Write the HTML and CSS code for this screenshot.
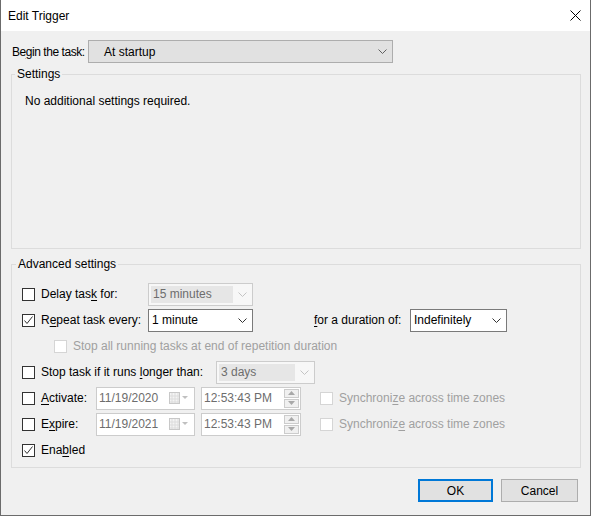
FILE: index.html
```html
<!DOCTYPE html>
<html>
<head>
<meta charset="utf-8">
<title>Edit Trigger</title>
<link rel="stylesheet" href="styles.css">
</head>
<body>
<div class="window">
  <div class="titlebar">
    <span class="title">Edit Trigger</span>
    <svg class="close" width="11" height="11" viewBox="0 0 11 11"><path d="M0.5 0.5L10.5 10.5M10.5 0.5L0.5 10.5" stroke="#000" stroke-width="1"/></svg>
  </div>
  <div class="content">
    <div class="begin-row">
      <span class="begin-label">Be<u>g</u>in the task:</span>
      <div class="combo combo-begin"><span class="combo-text">At startup</span><svg class="chev" width="9" height="5" viewBox="0 0 9 5"><path d="M0.5 0.5L4.5 4.5L8.5 0.5" fill="none" stroke="#606060"/></svg></div>
    </div>

    <fieldset class="group group-settings">
      <legend>Settings</legend>
      <p class="note">No additional settings required.</p>
    </fieldset>

    <fieldset class="group group-adv">
      <legend>Advanced settings</legend>

      <div class="row">
        <span class="cb"></span>
        <span class="lbl lbl-main">Delay tas<u>k</u> for:</span>
        <div class="combo combo-dis w105"><span class="combo-sel">15 minutes</span><svg class="chev" width="9" height="5" viewBox="0 0 9 5"><path d="M0.5 0.5L4.5 4.5L8.5 0.5" fill="none" stroke="#c4c4c4"/></svg></div>
      </div>

      <div class="row">
        <span class="cb checked"><svg width="11" height="11" viewBox="0 0 11 11"><path d="M1.5 5.5L4 8.5L9.5 1.5" fill="none" stroke="#333" stroke-width="1"/></svg></span>
        <span class="lbl lbl-main">R<u>e</u>peat task every:</span>
        <div class="combo combo-white w105"><span class="combo-text">1 minute</span><svg class="chev" width="9" height="5" viewBox="0 0 9 5"><path d="M0.5 0.5L4.5 4.5L8.5 0.5" fill="none" stroke="#333"/></svg></div>
        <span class="lbl lbl-dur"><u>f</u>or a duration of:</span>
        <div class="combo combo-white w97"><span class="combo-text">Indefinitely</span><svg class="chev" width="9" height="5" viewBox="0 0 9 5"><path d="M0.5 0.5L4.5 4.5L8.5 0.5" fill="none" stroke="#333"/></svg></div>
      </div>

      <div class="row row-indent">
        <span class="cb cb-dis"></span>
        <span class="lbl dis">Stop all running tasks at end of repetition duration</span>
      </div>

      <div class="row">
        <span class="cb"></span>
        <span class="lbl lbl-stop">Stop task if it runs <u>l</u>onger than:</span>
        <div class="combo combo-dis w99"><span class="combo-sel">3 days</span><svg class="chev" width="9" height="5" viewBox="0 0 9 5"><path d="M0.5 0.5L4.5 4.5L8.5 0.5" fill="none" stroke="#c4c4c4"/></svg></div>
      </div>

      <div class="row">
        <span class="cb"></span>
        <span class="lbl lbl-date"><u>A</u>ctivate:</span>
        <div class="field date"><span class="field-text">11/19/2020</span><span class="cal"><svg width="20" height="12" viewBox="0 0 20 12"><rect x="0.5" y="0.5" width="10" height="11" fill="#f4f4f4" stroke="#c8c8c8"/><path d="M3 1v10M6 1v10M9 1v10M1 4h9M1 7h9M1 10h9" stroke="#dcdcdc"/><path d="M13 4h6l-3 3z" fill="#c0c0c0"/></svg></span></div>
        <div class="field time"><span class="field-text">12:53:43 PM</span><span class="spin"><span class="spin-btn"><svg width="7" height="4" viewBox="0 0 7 4"><path d="M0 4h7L3.5 0z" fill="#a8a8a8"/></svg></span><span class="spin-btn"><svg width="7" height="4" viewBox="0 0 7 4"><path d="M0 0h7L3.5 4z" fill="#a8a8a8"/></svg></span></span></div>
        <span class="cb cb-dis sync-cb"></span>
        <span class="lbl dis">Synchroni<u>z</u>e across time zones</span>
      </div>

      <div class="row">
        <span class="cb"></span>
        <span class="lbl lbl-date">E<u>x</u>pire:</span>
        <div class="field date"><span class="field-text">11/19/2021</span><span class="cal"><svg width="20" height="12" viewBox="0 0 20 12"><rect x="0.5" y="0.5" width="10" height="11" fill="#f4f4f4" stroke="#c8c8c8"/><path d="M3 1v10M6 1v10M9 1v10M1 4h9M1 7h9M1 10h9" stroke="#dcdcdc"/><path d="M13 4h6l-3 3z" fill="#c0c0c0"/></svg></span></div>
        <div class="field time"><span class="field-text">12:53:43 PM</span><span class="spin"><span class="spin-btn"><svg width="7" height="4" viewBox="0 0 7 4"><path d="M0 4h7L3.5 0z" fill="#a8a8a8"/></svg></span><span class="spin-btn"><svg width="7" height="4" viewBox="0 0 7 4"><path d="M0 0h7L3.5 4z" fill="#a8a8a8"/></svg></span></span></div>
        <span class="cb cb-dis sync-cb"></span>
        <span class="lbl dis">Synchroniz<u>e</u> across time zones</span>
      </div>

      <div class="row">
        <span class="cb checked"><svg width="11" height="11" viewBox="0 0 11 11"><path d="M1.5 5.5L4 8.5L9.5 1.5" fill="none" stroke="#333" stroke-width="1"/></svg></span>
        <span class="lbl">Ena<u>b</u>led</span>
      </div>
    </fieldset>

    <div class="buttons">
      <button class="btn btn-default">OK</button>
      <button class="btn">Cancel</button>
    </div>
  </div>
</div>
</body>
</html>
```

FILE: styles.css
```css
* { box-sizing: border-box; }
html, body { margin: 0; padding: 0; background: #ffffff; }
body {
  font-family: "Liberation Sans", Arial, sans-serif;
  font-size: 12px;
  line-height: 16px;
  color: #000;
}
u { text-decoration: underline; text-underline-offset: 2px; }

.window {
  width: 591px;
  height: 516px;
  border: 1px solid #6b6b6b;
  border-top: 0;
  display: flex;
  flex-direction: column;
  background: #f0f0f0;
}

.titlebar {
  height: 31px;
  flex: none;
  background: #ffffff;
  display: flex;
  align-items: center;
  justify-content: space-between;
  padding: 0 9px 0 7px;
}
.title { font-size: 12px; }
.close { display: block; }

.content {
  flex: 1;
  padding: 9px 9px 0 10px;
  display: flex;
  flex-direction: column;
}

.begin-row {
  display: flex;
  align-items: center;
  height: 23px;
}
.begin-label {
  margin-left: 1px;
  width: 76px;
  flex: none;
  white-space: nowrap;
  letter-spacing: -0.45px;
}

.combo {
  height: 23px;
  display: flex;
  align-items: center;
  justify-content: space-between;
  flex: none;
}
.combo-begin {
  width: 305px;
  background: #e1e1e1;
  border: 1px solid #adadad;
  padding: 0 5px 0 15px;
}
.combo-white {
  background: #ffffff;
  border: 1px solid #7a7a7a;
  padding: 0 5px 0 3px;
}
.combo-dis {
  background: #f7f7f7;
  border: 1px solid #cccccc;
  padding: 2px 5px 2px 2px;
  color: #6d6d6d;
}
.combo-sel {
  flex: 1;
  align-self: stretch;
  display: flex;
  align-items: center;
  background: #e6e6e6;
  padding-left: 2px;
  margin-right: 5px;
}
.chev { display: block; flex: none; }
.w105 { width: 105px; }
.w97 { width: 97px; }
.w99 { width: 99px; }

.group {
  margin: 0;
  padding: 0;
  border: 1px solid #dcdcdc;
  min-width: 0;
}
.group legend {
  padding: 0 2px;
  line-height: 16px;
}
.group-settings {
  margin-top: 3px;
  height: 183px;
}
.group-settings legend { margin-left: 3px; }
.note { margin: 11px 0 0 13px; }

.group-adv {
  margin-top: 7px;
  padding: 9px 0 4px 0;
}
.group-adv legend { margin-left: 4px; }

.row {
  display: flex;
  align-items: center;
  height: 26px;
  padding-left: 10px;
}
.row-indent { padding-left: 42px; }

.cb {
  width: 13px;
  height: 13px;
  flex: none;
  border: 1px solid #333333;
  background: #ffffff;
  display: flex;
  align-items: center;
  justify-content: center;
}
.cb svg { display: block; }
.cb-dis { border-color: #d5d5d5; }
.lbl { margin-left: 6px; white-space: nowrap; }
.dis { color: #a0a0a0; }
.lbl-main { width: 107px; flex: none; }
.lbl-dur { margin-left: 61px; width: 96px; flex: none; }
.lbl-stop { width: 175px; flex: none; }
.lbl-date { width: 55px; flex: none; }

.field {
  height: 23px;
  flex: none;
  border: 1px solid #cccccc;
  background: #ffffff;
  color: #6d6d6d;
  display: flex;
  align-items: center;
  justify-content: space-between;
}
.field-text { padding-left: 2px; }
.date { width: 99px; padding-right: 5px; }
.cal { display: flex; }
.cal svg { display: block; }
.time { width: 100px; margin-left: 6px; padding-right: 1px; }
.spin {
  display: flex;
  flex-direction: column;
  gap: 1px;
  width: 15px;
}
.spin-btn {
  height: 9px;
  border: 1px solid #cccccc;
  background: #f0f0f0;
  display: flex;
  align-items: center;
  justify-content: center;
}
.spin-btn svg { display: block; }
.sync-cb { margin-left: 19px; }

.buttons {
  display: flex;
  justify-content: flex-end;
  gap: 8px;
  margin-top: 11px;
  margin-right: 3px;
}
.btn {
  font-family: "Liberation Sans", Arial, sans-serif;
  font-size: 12px;
  color: #000;
  height: 23px;
  width: 77px;
  background: #e1e1e1;
  border: 1px solid #adadad;
  padding: 0;
  margin: 0;
}
.btn-default {
  width: 75px;
  border: 2px solid #0078d7;
}
```
